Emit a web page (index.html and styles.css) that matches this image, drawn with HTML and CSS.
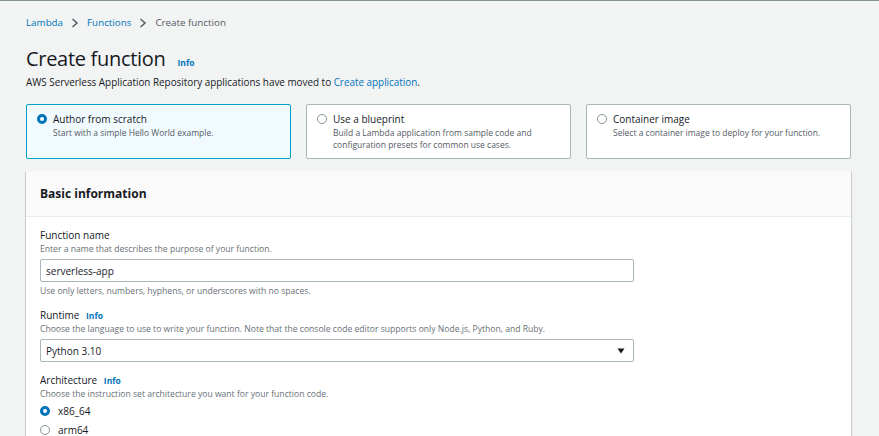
FILE: index.html
```html
<!DOCTYPE html>
<html lang="en">
<head>
<meta charset="utf-8">
<title>Create function</title>
<link rel="stylesheet" href="styles.css">
</head>
<body>
<div class="page">
  <nav class="crumbs">
    <a class="link">Lambda</a>
    <svg class="chev" viewBox="0 0 8 10" width="8" height="10"><path d="M1.5 1 L6 5 L1.5 9" fill="none" stroke="#545b64" stroke-width="1.5"/></svg>
    <a class="link">Functions</a>
    <svg class="chev" viewBox="0 0 8 10" width="8" height="10"><path d="M1.5 1 L6 5 L1.5 9" fill="none" stroke="#545b64" stroke-width="1.5"/></svg>
    <span class="current">Create function</span>
  </nav>

  <div class="title-row">
    <h1 class="title">Create function</h1>
    <a class="info">Info</a>
  </div>
  <p class="subtitle">AWS Serverless Application Repository applications have moved to <a class="link">Create application</a>.</p>

  <div class="cards">
    <div class="card selected">
      <span class="radio on"></span>
      <div class="card-text">
        <div class="card-title">Author from scratch</div>
        <div class="card-desc">Start with a simple Hello World example.</div>
      </div>
    </div>
    <div class="card">
      <span class="radio"></span>
      <div class="card-text">
        <div class="card-title">Use a blueprint</div>
        <div class="card-desc">Build a Lambda application from sample code and configuration presets for common use cases.</div>
      </div>
    </div>
    <div class="card">
      <span class="radio"></span>
      <div class="card-text">
        <div class="card-title">Container image</div>
        <div class="card-desc">Select a container image to deploy for your function.</div>
      </div>
    </div>
  </div>

  <section class="panel">
    <header class="panel-head">Basic information</header>
    <div class="panel-body">
      <div class="field">
        <div class="label">Function name</div>
        <div class="desc">Enter a name that describes the purpose of your function.</div>
        <div class="input">serverless-app</div>
        <div class="hint">Use only letters, numbers, hyphens, or underscores with no spaces.</div>
      </div>
      <div class="field">
        <div class="label">Runtime <a class="info">Info</a></div>
        <div class="desc">Choose the language to use to write your function. Note that the console code editor supports only Node.js, Python, and Ruby.</div>
        <div class="input select">
          <span>Python 3.10</span>
          <svg class="caret" viewBox="0 0 8 6" width="8" height="6"><path d="M0.5 0.5 H7.5 L4 5.5 Z" fill="#16191f"/></svg>
        </div>
      </div>
      <div class="field">
        <div class="label">Architecture <a class="info">Info</a></div>
        <div class="desc">Choose the instruction set architecture you want for your function code.</div>
        <div class="options">
          <div class="option"><span class="radio on"></span>x86_64</div>
          <div class="option"><span class="radio"></span>arm64</div>
        </div>
      </div>
    </div>
  </section>
</div>
</body>
</html>
```

FILE: styles.css
```css
* { box-sizing: border-box; }
html, body { margin: 0; padding: 0; }
body {
  background: #f2f3f3;
  border-top: 1px solid #879596;
  font-family: "Open Sans", "Noto Sans", sans-serif;
  color: #16191f;
  overflow: hidden;
  height: 436px;
}
.page { padding: 14px 28px 0 26px; }
.link { color: #0073bb; text-decoration: none; }
.crumbs {
  display: flex;
  align-items: center;
  gap: 8px;
  font-size: 9.8px;
  line-height: 16px;
  height: 16px;
}
.chev { display: block; }
.current { color: #545b64; }

.title-row {
  display: flex;
  align-items: baseline;
  gap: 12px;
  margin-top: 14px;
  height: 28px;
}
.title {
  margin: 0;
  font-size: 20px;
  font-weight: 400;
  letter-spacing: -0.3px;
  line-height: 28px;
}
.info {
  color: #0073bb;
  font-size: 8.5px;
  font-weight: 700;
}
.subtitle {
  margin: 1px 0 0;
  font-size: 9.9px;
  line-height: 16px;
  color: #16191f;
}

.cards {
  display: grid;
  grid-template-columns: repeat(3, 1fr);
  gap: 15px;
  margin-top: 14px;
}
.card {
  display: flex;
  align-items: flex-start;
  gap: 6px;
  height: 55px;
  padding: 6px 10px 0 10px;
  background: #fff;
  border: 1px solid #aab7b8;
  border-radius: 2px;
}
.card.selected {
  background: #f1faff;
  border-color: #00a1c9;
}
.card .radio { margin-top: 3px; }
.card-title { font-size: 10px; line-height: 16px; }
.card-desc { font-size: 8.5px; line-height: 12px; color: #545b64; }

.radio {
  flex: none;
  display: inline-block;
  width: 10px;
  height: 10px;
  border-radius: 50%;
  border: 1px solid #879596;
  background: #fff;
}
.radio.on { border: 3px solid #0073bb; }

.panel {
  margin-top: 12px;
  background: #fff;
  box-shadow: 0 1px 1px 0 rgba(0,28,36,.25), 1px 1px 1px 0 rgba(0,28,36,.12), -1px 1px 1px 0 rgba(0,28,36,.12);
  height: 280px;
}
.panel-head {
  height: 46px;
  padding: 0 14px;
  display: flex;
  align-items: center;
  background: #fafafa;
  border-bottom: 1px solid #eaeded;
  font-size: 12px;
  font-weight: 700;
}
.panel-body { padding: 11px 14px 0; }
.field + .field { margin-top: 11px; }
.label { font-size: 10px; line-height: 15px; }
.label .info { margin-left: 4px; }
.desc, .hint { font-size: 8.6px; line-height: 12px; color: #687078; }
.input {
  margin-top: 4px;
  width: 594px;
  height: 23px;
  border: 1px solid #aab7b8;
  border-radius: 2px;
  padding: 0 5px;
  display: flex;
  align-items: center;
  font-size: 10px;
  background: #fff;
}
.hint { margin-top: 3px; }
.select { justify-content: space-between; padding-right: 8px; }
.caret { display: block; }
.options { margin-top: 4px; display: flex; flex-direction: column; gap: 5px; }
.option {
  display: flex;
  align-items: center;
  gap: 8px;
  font-size: 10px;
  line-height: 14px;
}
```
